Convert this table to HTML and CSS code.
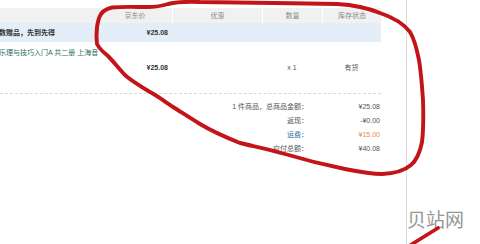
FILE: index.html
```html
<!DOCTYPE html>
<html lang="zh-CN">
<head>
<meta charset="utf-8">
<title>购物车结算</title>
<link rel="stylesheet" href="styles.css">
</head>
<body>
<div class="page">
  <div class="cart">
    <div class="thead grid">
      <div class="c-name"></div>
      <div class="c-price">京东价</div>
      <div class="c-promo">优惠</div>
      <div class="c-qty">数量</div>
      <div class="c-stock">库存状态</div>
    </div>
    <div class="gift-row grid">
      <div class="c-name"><span class="gift-text">数赠品，先到先得</span></div>
      <div class="c-price price">¥25.08</div>
      <div class="c-promo"></div>
      <div class="c-qty"></div>
      <div class="c-stock"></div>
    </div>
    <div class="item">
      <div class="item-title">乐理与技巧入门A 共二册 上海音</div>
      <div class="item-row grid">
        <div class="c-name"></div>
        <div class="c-price price">¥25.08</div>
        <div class="c-promo"></div>
        <div class="c-qty">x 1</div>
        <div class="c-stock">有货</div>
      </div>
    </div>
    <div class="summary">
      <div class="s-label">1 件商品，总商品金额：</div><div class="s-value">¥25.08</div>
      <div class="s-label">返现：</div><div class="s-value">-¥0.00</div>
      <div class="s-label freight">运费：</div><div class="s-value fee">¥15.00</div>
      <div class="s-label">应付总额：</div><div class="s-value">¥40.08</div>
    </div>
  </div>
  <div class="rail">
    <div class="watermark">贝站网</div>
  </div>
  <svg class="scribble" width="480" height="244" viewBox="0 0 480 244" aria-hidden="true">
    <path d="M97 44 C96 34 97 24 99 18 C101 12 105 9 112 7.5 C122 6.5 135 7 147 7 C156 7 162 6 168 4 C176 2 186 1.5 200 2 C230 2.5 290 3 337 4 C355 5 368 8 380 13 C392 17 403 23 410 32 C415 40 417 50 419 60 C421 72 422 85 423 100 C423.5 115 423.5 130 422 142 C420 152 417 160 411 165 C404 171 395 173.5 382 174 C370 174 360 172 345 169 C325 165 305 160 285 154 C268 149 252 146 240 143 C225 137 210 130 200 124 C190 118 181 112 173 107 C165 102 158 96 150 92 C140 86 132 81 126 76 C119 69 114 62 108 56 C103 52 99 48 97 44"
      fill="none" stroke="#c3141a" stroke-width="3.9" stroke-linecap="round" stroke-linejoin="round"/>
    <path d="M409 246 L438 228" fill="none" stroke="#c3141a" stroke-width="3.6" stroke-linecap="round"/>
  </svg>
</div>
</body>
</html>
```
FILE: styles.css
```css
html, body {
  margin: 0;
  padding: 0;
  background: #fff;
}

body {
  font-family: "Liberation Sans", "Noto Sans CJK SC", sans-serif;
  font-size: 7px;
  color: #555;
  overflow: hidden;
}

.page {
  position: relative;
  display: flex;
  width: 480px;
  height: 244px;
  overflow: hidden;
}

.cart {
  width: 381px;
  flex: none;
  padding-top: 8px;
}

.grid {
  display: grid;
  grid-template-columns: 98px 74px 90px 60px 59px;
}

.thead {
  height: 15px;
  line-height: 15px;
  background: #f1f1f1;
  color: #8a8a8a;
  text-align: center;
}

.thead .c-promo,
.thead .c-qty,
.thead .c-stock {
  border-left: 1px solid #fff;
}

.gift-row {
  height: 19px;
  line-height: 19px;
  background: #e3eef9;
  color: #333;
}

.gift-text {
  display: inline-block;
  margin-left: -1px;
  font-weight: bold;
  white-space: nowrap;
}

.c-name {
  overflow: hidden;
  white-space: nowrap;
}

.price {
  text-align: right;
  padding-right: 4px;
  font-weight: bold;
  color: #333;
}

.c-qty,
.c-stock {
  text-align: center;
}

.item {
  padding: 5px 0 16px;
  border-bottom: 1px dashed #d9d9d9;
}

.item-title {
  height: 12px;
  line-height: 12px;
  color: #1f6e63;
  white-space: nowrap;
  margin-left: -1px;
}

.item-row {
  height: 18px;
  line-height: 18px;
  color: #555;
}

.summary {
  display: grid;
  grid-template-columns: 1fr 72px;
  margin-top: 6px;
  padding-right: 1px;
  line-height: 14px;
  color: #555;
}

.s-label,
.s-value {
  text-align: right;
}

.freight {
  color: #1d6aa5;
}

.fee {
  color: #e88a4a;
}

.rail {
  flex: none;
  margin-left: 25px;
  width: 73px;
  height: 244px;
  border-left: 1px solid #dcdcdc;
  display: flex;
  flex-direction: column;
  justify-content: flex-end;
}

.watermark {
  font-family: "Noto Sans CJK SC", sans-serif;
  font-size: 19px;
  line-height: 22px;
  margin-bottom: 14px;
  color: #969696;
  white-space: nowrap;
}

.scribble {
  position: absolute;
  left: 0;
  top: 0;
  pointer-events: none;
}
```
